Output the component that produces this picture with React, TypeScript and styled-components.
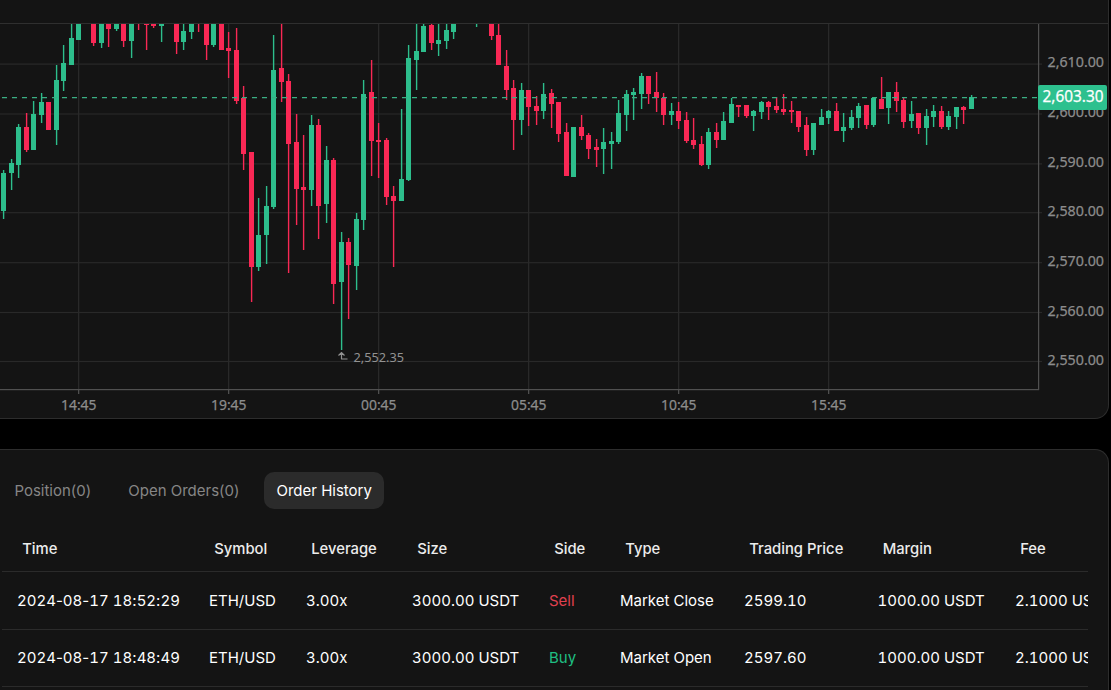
import React from "react";
import styled, { createGlobalStyle } from "styled-components";

const GlobalStyle = createGlobalStyle`
  * { box-sizing: border-box; }
  html, body { margin: 0; padding: 0; background: #000; }
  body { width: 1111px; height: 690px; overflow: hidden; font-family: Inter, "Liberation Sans", sans-serif; }
`;

const UP = "#2dbe8c";
const DOWN = "#f92855";

const Page = styled.main`
  width: 1109px;
  height: 690px;
  overflow: hidden;
  display: flex;
  flex-direction: column;
  gap: 30px;
`;

const ChartCard = styled.section`
  height: 419px;
  flex: none;
  background: #141414;
  border: solid #2d2d2d;
  border-width: 0 1px 1px 0;
  border-radius: 0 0 14px 0;
  overflow: hidden;
`;

const ChartToolbar = styled.header`
  height: 24px;
  border-bottom: 1px solid #2f2f2f;
`;

const ChartSvg = styled.svg`
  display: block;
`;

const AxisText = styled.text`
  font-family: "Noto Sans", "Open Sans", sans-serif;
  font-size: 15px;
  fill: #8c8c8c;
  stroke: #8c8c8c;
  stroke-width: 0.25px;
`;

const TagText = styled(AxisText)`
  font-size: 16px;
  fill: #ffffff;
  stroke: #ffffff;
`;

const MarkText = styled(AxisText)`
  font-size: 13px;
  fill: #929292;
  stroke: none;
`;

const OrdersCard = styled.section`
  flex: none;
  height: 260px;
  background: #141414;
  border: solid #2d2d2d;
  border-width: 1px 1px 0 0;
  border-radius: 0 14px 0 0;
  padding: 22px 20px 0 2px;
`;

const Tabs = styled.nav`
  display: flex;
  gap: 13px;
  height: 37px;
`;

const Tab = styled.button<{ $active?: boolean }>`
  border: 0;
  padding: 0 11.6px 0 12.4px;
  height: 37px;
  border-radius: 10px;
  background: ${(p) => (p.$active ? "#2b2b2b" : "transparent")};
  color: ${(p) => (p.$active ? "#ffffff" : "#868686")};
  font: 400 15px/37px Inter, sans-serif;
  white-space: nowrap;
`;

const Table = styled.div`
  margin-top: 17px;
  overflow: hidden;
`;

const Row = styled.div<{ $height: number }>`
  display: grid;
  grid-template-columns: 192px 97px 106px 137px 71px 124px 133.5px 137.5px 110px;
  align-items: center;
  height: ${(p) => p.$height}px;
  padding-left: 15px;
  border-bottom: 1px solid #2b2b2b;
`;

const HeadCell = styled.span`
  padding-left: 5.2px;
  color: #ececec;
  font-size: 14.8px;
  font-weight: 500;
  line-height: 20px;
  white-space: nowrap;
`;

const Cell = styled.span<{ $color?: string }>`
  color: ${(p) => p.$color ?? "#ffffff"};
  font-size: 15px;
  font-variant-numeric: tabular-nums;
  line-height: 20px;
  white-space: nowrap;
`;

const Separator = styled.span`
  font-variant-numeric: normal;
`;

type Candle = [slot: number, up: 0 | 1, high: number, top: number, bottom: number, low: number];

const candles: Candle[] = [
  [0, 1, 170, 173, 211, 219], [1, 1, 159, 163, 173, 190], [2, 1, 124, 127, 165, 178],
  [3, 0, 113, 127, 150, 152], [4, 1, 101, 114, 150, 150], [5, 1, 93, 102, 115, 123],
  [6, 0, 102, 102, 130, 130], [7, 1, 65, 80, 130, 145], [8, 1, 45, 63, 81, 91],
  [9, 1, 24, 38, 65, 65], [10, 1, 24, 24, 40, 40], [12, 0, 24, 24, 43, 46],
  [13, 1, 24, 24, 43, 48], [14, 0, 24, 24, 29, 47], [15, 1, 24, 24, 29, 31],
  [16, 0, 24, 24, 41, 47], [17, 1, 24, 24, 41, 58], [18, 0, 24, 24, 24, 30],
  [19, 0, 24, 24, 25, 50], [20, 0, 24, 24, 26, 28], [21, 1, 24, 24, 26, 42],
  [23, 0, 24, 24, 42, 54], [24, 1, 24, 31, 42, 50], [25, 1, 24, 24, 32, 39],
  [26, 0, 24, 24, 24, 32], [27, 0, 24, 24, 45, 60], [28, 1, 24, 24, 45, 47],
  [29, 0, 24, 24, 50, 50], [30, 0, 32, 48, 51, 78], [31, 0, 28, 50, 101, 104],
  [32, 0, 86, 98, 154, 170], [33, 0, 152, 152, 267, 302], [34, 1, 198, 235, 267, 271],
  [35, 1, 186, 206, 235, 264], [36, 1, 35, 70, 207, 209], [37, 0, 24, 68, 82, 102],
  [38, 0, 74, 81, 144, 273], [39, 0, 114, 142, 189, 225], [40, 0, 135, 187, 190, 250],
  [41, 1, 115, 125, 190, 206], [42, 0, 119, 125, 206, 239], [43, 1, 146, 160, 204, 223],
  [44, 0, 158, 160, 284, 304], [45, 1, 232, 242, 282, 350], [46, 0, 238, 242, 265, 319],
  [47, 1, 213, 219, 266, 290], [48, 1, 80, 94, 220, 230], [49, 0, 60, 92, 141, 176],
  [50, 0, 123, 140, 142, 178], [51, 0, 138, 140, 197, 205], [52, 0, 186, 196, 201, 267],
  [53, 1, 109, 179, 201, 201], [54, 1, 45, 58, 180, 181], [55, 1, 24, 51, 60, 90],
  [56, 1, 24, 26, 52, 52], [57, 0, 24, 25, 43, 50], [58, 1, 24, 40, 44, 56],
  [59, 1, 24, 30, 41, 49], [60, 1, 24, 24, 32, 39], [63, 1, 24, 24, 24, 27],
  [65, 0, 24, 24, 36, 40], [66, 0, 24, 35, 65, 65], [67, 0, 50, 66, 90, 100],
  [68, 0, 80, 88, 120, 150], [69, 1, 83, 90, 120, 135], [70, 0, 90, 90, 107, 126],
  [71, 0, 96, 106, 111, 125], [72, 1, 83, 94, 111, 119], [73, 0, 89, 93, 104, 128],
  [74, 0, 102, 102, 134, 142], [75, 0, 123, 132, 176, 176], [76, 1, 127, 127, 177, 177],
  [77, 0, 115, 127, 136, 140], [78, 0, 133, 135, 149, 159], [79, 0, 139, 147, 150, 167],
  [80, 1, 128, 142, 149, 174], [81, 1, 132, 141, 144, 169], [82, 1, 100, 113, 142, 144],
  [83, 1, 90, 94, 115, 131], [84, 1, 88, 92, 95, 120], [85, 1, 73, 76, 94, 109],
  [86, 0, 76, 76, 94, 104], [87, 0, 72, 92, 98, 112], [88, 0, 93, 98, 115, 125],
  [89, 1, 103, 111, 115, 125], [90, 0, 102, 111, 121, 129], [91, 0, 112, 120, 141, 143],
  [92, 0, 118, 140, 145, 149], [93, 0, 136, 144, 165, 166], [94, 1, 128, 132, 165, 169],
  [95, 0, 123, 132, 140, 148], [96, 1, 112, 121, 140, 140], [97, 1, 98, 104, 123, 123],
  [98, 0, 105, 105, 107, 117], [99, 0, 105, 105, 116, 118], [100, 1, 110, 111, 116, 131],
  [101, 1, 101, 102, 112, 119], [102, 0, 101, 102, 107, 120], [103, 0, 97, 106, 110, 113],
  [104, 0, 94, 109, 112, 115], [105, 0, 101, 110, 112, 123], [106, 0, 111, 111, 127, 132],
  [107, 0, 117, 125, 150, 156], [108, 1, 123, 123, 150, 155], [109, 1, 109, 117, 125, 125],
  [110, 1, 110, 111, 118, 124], [111, 0, 103, 111, 131, 131], [112, 1, 113, 127, 131, 142],
  [113, 1, 110, 117, 128, 130], [114, 1, 103, 106, 118, 128], [115, 0, 105, 105, 125, 129],
  [116, 1, 97, 98, 125, 127], [117, 0, 77, 99, 109, 109], [118, 1, 92, 92, 108, 124],
  [119, 0, 82, 92, 101, 112], [120, 0, 98, 100, 122, 128], [121, 1, 101, 114, 121, 128],
  [122, 0, 113, 113, 128, 134], [123, 1, 109, 116, 128, 145], [124, 1, 105, 111, 117, 127],
  [125, 0, 106, 111, 127, 129], [126, 1, 111, 116, 127, 130], [127, 1, 107, 107, 117, 129],
  [128, 0, 106, 107, 110, 124], [129, 1, 95, 97, 109, 109],
];

const priceTicks: [number, string][] = [
  [63.6, "2,610.00"], [113.5, "2,600.00"], [163.4, "2,590.00"], [212.2, "2,580.00"],
  [262.2, "2,570.00"], [312, "2,560.00"], [361, "2,550.00"],
];

const timeTicks: [number, string][] = [
  [78, "14:45"], [228, "19:45"], [378, "00:45"], [528, "05:45"], [678, "10:45"], [828, "15:45"],
];

const Chart = () => (
  <ChartSvg width="1108" height="394" viewBox="0 24 1108 394">
    {priceTicks.map(([y, label]) => (
      <g key={label}>
        <rect x="0" y={y - 0.1} width="1042" height="1.2" fill="#292929" />
        <AxisText x="1047.5" y={y + 3.7} textLength="56.5" lengthAdjust="spacingAndGlyphs">{label}</AxisText>
      </g>
    ))}
    {timeTicks.map(([x, label]) => (
      <g key={label}>
        <rect x={x} y="24" width="1.3" height="365" fill="#292929" />
        <rect x={x} y="390" width="1.3" height="4" fill="#505050" />
        <AxisText x={x - 17} y="410" textLength="35.5" lengthAdjust="spacingAndGlyphs">{label}</AxisText>
      </g>
    ))}
    {candles.map(([slot, up, high, top, bottom, low]) => {
      const x = Math.floor(3.75 + slot * 7.5);
      return (
        <g key={slot} fill={up ? UP : DOWN}>
          <rect x={x - 0.1} y={high} width="1.4" height={low - high} />
          {bottom > top && <rect x={x - 2} y={top} width="5" height={bottom - top} />}
        </g>
      );
    })}
    <path d="M341.5 359V352.5M338.5 355.5L341.5 352.5L344.5 355.5M341 359H347.5" fill="none" stroke="#929292" strokeWidth="1.2" />
    <MarkText x="353.5" y="362" textLength="50.5" lengthAdjust="spacingAndGlyphs">2,552.35</MarkText>
    <path d="M2 97.6H1038" stroke="#3aae83" strokeWidth="1.4" strokeDasharray="5 5" />
    <rect x="1038" y="24" width="1.2" height="366" fill="#505050" />
    <rect x="0" y="389" width="1039" height="1.2" fill="#505050" />
    <rect x="1038" y="85" width="69" height="25" rx="2" fill="#2dc08e" />
    <TagText x="1042.5" y="102.4" textLength="61" lengthAdjust="spacingAndGlyphs">2,603.30</TagText>
  </ChartSvg>
);

/* Keeps the digits of a timestamp tabular and its punctuation proportional. */
const Timestamp = ({ value }: { value: string }) => (
  <>
    {value.split(/([-: ])/).map((part, i) => (i % 2 ? <Separator key={i}>{part}</Separator> : part))}
  </>
);

const headers = ["Time", "Symbol", "Leverage", "Size", "Side", "Type", "Trading Price", "Margin", "Fee"];

const orders = [
  { height: 58, side: "Sell", color: "#e0404f", time: "2024-08-17 18:52:29", cells: ["ETH/USD", "3.00x", "3000.00 USDT", "Sell", "Market Close", "2599.10", "1000.00 USDT", "2.1000 USDT"] },
  { height: 57, side: "Buy", color: "#1fbf83", time: "2024-08-17 18:48:49", cells: ["ETH/USD", "3.00x", "3000.00 USDT", "Buy", "Market Open", "2597.60", "1000.00 USDT", "2.1000 USDT"] },
];

export default function App() {
  return (
    <>
      <GlobalStyle />
      <Page>
        <ChartCard>
          <ChartToolbar />
          <Chart />
        </ChartCard>
        <OrdersCard>
          <Tabs>
            <Tab>Position(0)</Tab>
            <Tab>Open Orders(0)</Tab>
            <Tab $active>Order History</Tab>
          </Tabs>
          <Table>
            <Row $height={46}>
              {headers.map((h) => <HeadCell key={h}>{h}</HeadCell>)}
            </Row>
            {orders.map((o) => (
              <Row key={o.side} $height={o.height}>
                <Cell><Timestamp value={o.time} /></Cell>
                {o.cells.map((c, i) => (
                  <Cell key={i} $color={i === 3 ? o.color : undefined}>{c}</Cell>
                ))}
              </Row>
            ))}
          </Table>
        </OrdersCard>
      </Page>
    </>
  );
}
